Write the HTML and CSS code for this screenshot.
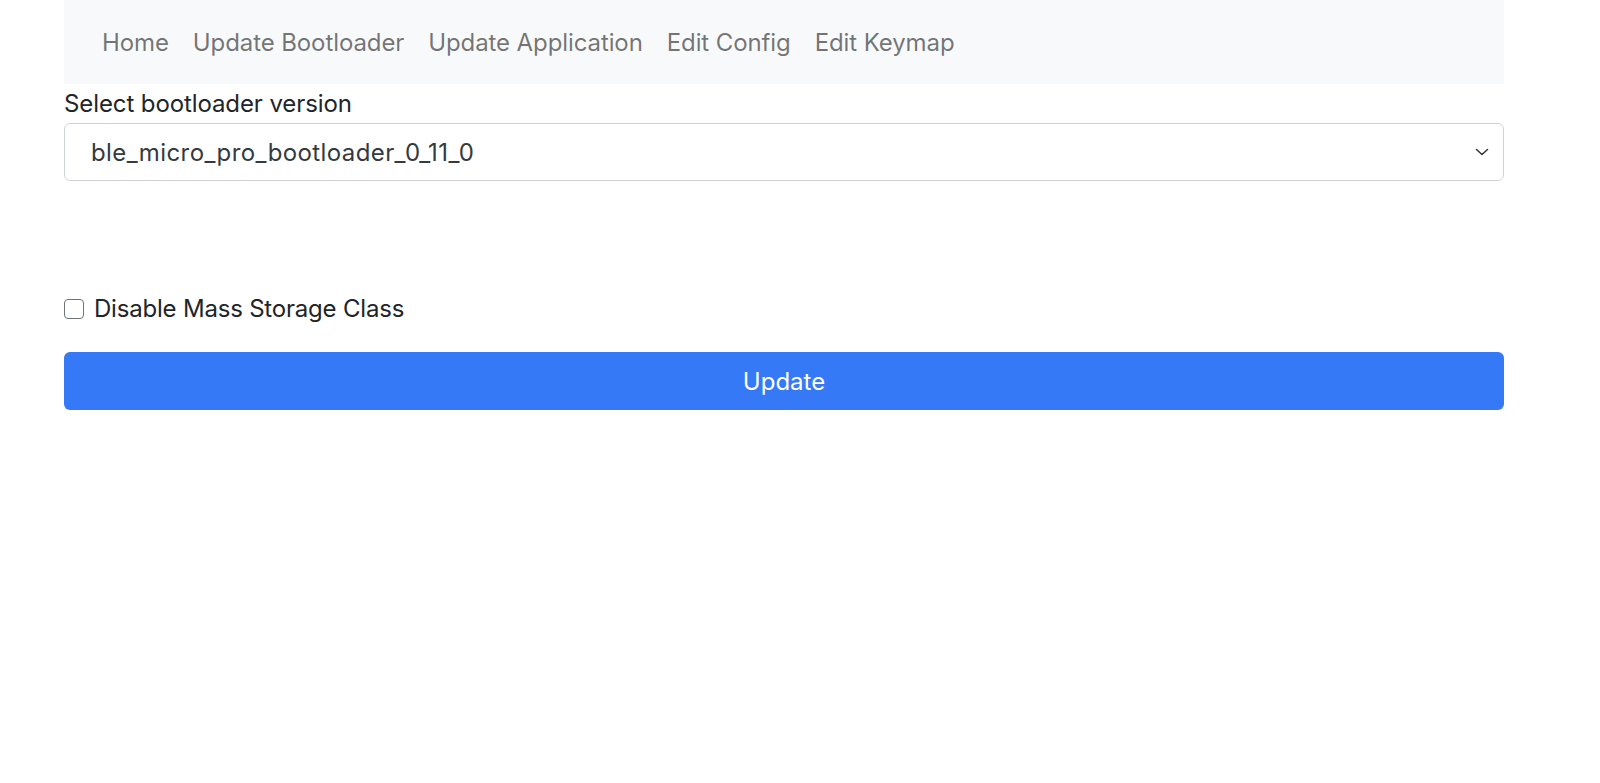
FILE: index.html
```html
<!DOCTYPE html>
<html lang="en">
<head>
<meta charset="utf-8">
<title>Update Bootloader</title>
<link rel="stylesheet" href="styles.css">
</head>
<body>
<div class="container">
  <nav class="navbar">
    <a class="nav-link" href="#">Home</a>
    <a class="nav-link" href="#">Update Bootloader</a>
    <a class="nav-link" href="#">Update Application</a>
    <a class="nav-link" href="#">Edit Config</a>
    <a class="nav-link" href="#">Edit Keymap</a>
  </nav>
  <label class="form-label" for="ver">Select bootloader version</label>
  <div class="select-wrap">
    <select id="ver" class="form-select">
      <option>ble_micro_pro_bootloader_0_11_0</option>
    </select>
    <svg class="chevron" width="16" height="16" viewBox="0 0 16 16"><path d="M2.5 5.5 L8 10.5 L13.5 5.5" fill="none" stroke="#343a40" stroke-width="1.6" stroke-linecap="round" stroke-linejoin="round"/></svg>
  </div>
  <div class="spacer"></div>
  <div class="form-check">
    <input type="checkbox" id="msc" class="check">
    <label for="msc" class="check-label">Disable Mass Storage Class</label>
  </div>
  <button class="btn-primary" type="button">Update</button>
</div>
</body>
</html>
```
FILE: styles.css
```css
html, body {
  margin: 0;
  padding: 0;
  background: #ffffff;
}
body {
  font-family: Inter, "Liberation Sans", Arial, sans-serif;
  font-size: 24px;
  color: #212529;
}
.container {
  width: 1440px;
  margin-left: 64px;
  display: flex;
  flex-direction: column;
}
.navbar {
  background: #f8f9fa;
  height: 84px;
  display: flex;
  align-items: center;
  box-sizing: border-box;
  padding-left: 26px;
  padding-top: 2px;
}
.nav-link {
  color: rgba(0, 0, 0, 0.55);
  text-decoration: none;
  padding: 0 12px;
  line-height: 36px;
  letter-spacing: -0.1px;
}
.form-label {
  display: block;
  line-height: 36px;
  margin-top: 2px;
  margin-bottom: 1px;
  color: #212529;
  letter-spacing: -0.1px;
}
.select-wrap {
  position: relative;
}
.form-select {
  width: 100%;
  height: 58px;
  box-sizing: border-box;
  appearance: none;
  -webkit-appearance: none;
  font-family: inherit;
  font-size: 24px;
  letter-spacing: 0.4px;
  color: #343a40;
  background: #fff;
  border: 1.5px solid #d0d3d6;
  border-radius: 6px;
  padding: 0 54px 0 26px;
}
.chevron {
  position: absolute;
  right: 14px;
  top: 21px;
  pointer-events: none;
}
.spacer {
  height: 116px;
}
.form-check {
  display: flex;
  align-items: center;
  height: 24px;
  gap: 10px;
}
.check {
  appearance: none;
  -webkit-appearance: none;
  width: 20px;
  height: 20px;
  margin: 0;
  border: 1.5px solid #6f7479;
  border-radius: 4px;
  background: #fff;
  box-sizing: border-box;
}
.check-label {
  line-height: 24px;
  color: #212529;
  letter-spacing: -0.2px;
}
.btn-primary {
  margin-top: 31px;
  height: 58px;
  border: none;
  border-radius: 6px;
  background: #3579f6;
  color: #fff;
  font-family: inherit;
  font-size: 24px;
  width: 100%;
}
```
